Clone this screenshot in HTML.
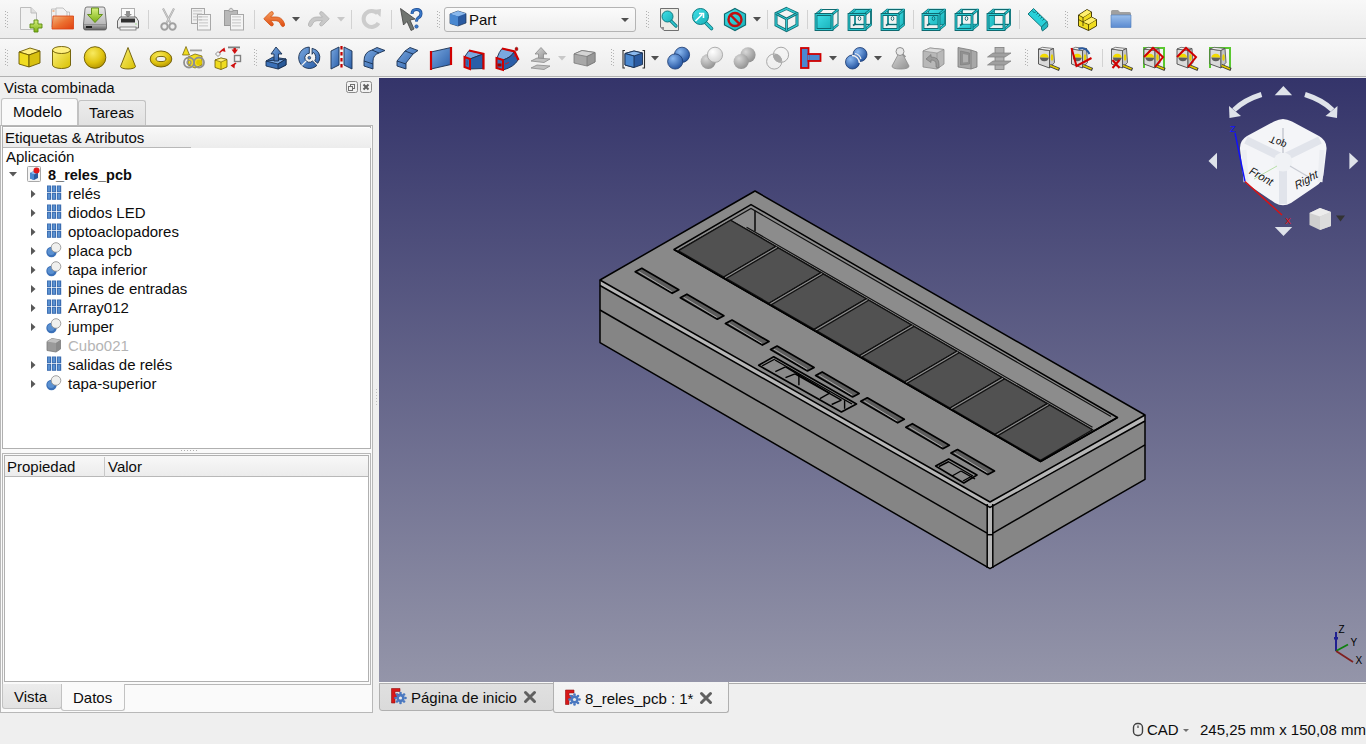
<!DOCTYPE html><html><head><meta charset="utf-8"><style>
*{box-sizing:border-box}
html,body{margin:0;padding:0}
body{width:1366px;height:744px;overflow:hidden;position:relative;background:#efefef;font-family:"Liberation Sans",sans-serif;font-size:15px;color:#0c0c0c}
.a{position:absolute}
.t{position:absolute;white-space:pre;line-height:18px}
svg{position:absolute;overflow:visible}
</style></head><body>
<div class="a" style="left:0;top:0;width:1366px;height:38px;background:linear-gradient(#f8f8f8,#ececec)"></div>
<div class="a" style="left:0;top:38px;width:1366px;height:1px;background:#bcbcbc"></div>
<div class="a" style="left:0;top:39px;width:1366px;height:37px;background:linear-gradient(#f8f8f8,#ececec)"></div>
<div class="a" style="left:0;top:76px;width:1366px;height:1px;background:#b2b2b2"></div>
<svg class="a" style="left:0;top:0" width="1366" height="77" viewBox="0 0 1366 77"><defs>
<linearGradient id="gy" x1="0" y1="0" x2="1" y2="1"><stop offset="0" stop-color="#fbf07a"/><stop offset="1" stop-color="#d8c000"/></linearGradient>
<radialGradient id="gys" cx="0.4" cy="0.3" r="0.75"><stop offset="0" stop-color="#f8ea60"/><stop offset="0.6" stop-color="#e0c410"/><stop offset="1" stop-color="#b09000"/></radialGradient>
<linearGradient id="gb" x1="0" y1="0" x2="1" y2="1"><stop offset="0" stop-color="#7aa8e0"/><stop offset="1" stop-color="#2a5ea8"/></linearGradient>
<radialGradient id="gbs" cx="0.35" cy="0.3" r="0.8"><stop offset="0" stop-color="#8ab8f0"/><stop offset="1" stop-color="#1a4a98"/></radialGradient>
<radialGradient id="ggs" cx="0.35" cy="0.3" r="0.8"><stop offset="0" stop-color="#d8d8d8"/><stop offset="1" stop-color="#8a8a8a"/></radialGradient>
<radialGradient id="gws" cx="0.35" cy="0.3" r="0.8"><stop offset="0" stop-color="#ffffff"/><stop offset="1" stop-color="#d0d0d0"/></radialGradient>
<linearGradient id="gor" x1="0" y1="0" x2="0" y2="1"><stop offset="0" stop-color="#f5a060"/><stop offset="1" stop-color="#e04a10"/></linearGradient>
<linearGradient id="gorf" x1="0" y1="0" x2="1" y2="1"><stop offset="0" stop-color="#f2b880"/><stop offset="0.5" stop-color="#ec7030"/><stop offset="1" stop-color="#e04010"/></linearGradient>
<linearGradient id="ggr" x1="0" y1="0" x2="0" y2="1"><stop offset="0" stop-color="#d8f080"/><stop offset="1" stop-color="#7ab010"/></linearGradient>
<linearGradient id="gdr" x1="0" y1="0" x2="0" y2="1"><stop offset="0" stop-color="#e8e8e8"/><stop offset="0.75" stop-color="#b8b8b8"/><stop offset="1" stop-color="#606060"/></linearGradient>
<linearGradient id="gt" x1="0" y1="0" x2="1" y2="1"><stop offset="0" stop-color="#40e0e8"/><stop offset="1" stop-color="#18b0b8"/></linearGradient>
<linearGradient id="ggy" x1="0" y1="0" x2="1" y2="1"><stop offset="0" stop-color="#d8d8d8"/><stop offset="1" stop-color="#909090"/></linearGradient>
<linearGradient id="gfold" x1="0" y1="0" x2="0" y2="1"><stop offset="0" stop-color="#9cc0ec"/><stop offset="1" stop-color="#5a8ad0"/></linearGradient>
</defs><rect x="5" y="11" width="1" height="1" fill="#b0b0b0"/><rect x="7" y="12" width="1" height="1" fill="#b8b8b8"/><rect x="5" y="14" width="1" height="1" fill="#b0b0b0"/><rect x="7" y="15" width="1" height="1" fill="#b8b8b8"/><rect x="5" y="17" width="1" height="1" fill="#b0b0b0"/><rect x="7" y="18" width="1" height="1" fill="#b8b8b8"/><rect x="5" y="20" width="1" height="1" fill="#b0b0b0"/><rect x="7" y="21" width="1" height="1" fill="#b8b8b8"/><rect x="5" y="23" width="1" height="1" fill="#b0b0b0"/><rect x="7" y="24" width="1" height="1" fill="#b8b8b8"/><rect x="5" y="26" width="1" height="1" fill="#b0b0b0"/><rect x="7" y="27" width="1" height="1" fill="#b8b8b8"/><g transform="translate(18,7)"><path d="M2.5,0.5 H13 L18.5,6 V22.5 H2.5 Z" fill="#f2f2f2" stroke="#bdbdbd"/><path d="M13,0.5 V6 H18.5" fill="#e0e0e0" stroke="#bdbdbd"/><path d="M16,13 H20 V17 H24 V21 H20 V25 H16 V21 H12 V17 H16 Z" fill="url(#ggr)" stroke="#5a8a10" stroke-width="0.9"/></g><g transform="translate(50,7)"><path d="M1.5,2 H8 V20 H1.5 Z" fill="#f0f0f0" stroke="#c0c0c0"/><rect x="2.5" y="3.5" width="2" height="1" fill="#f08030"/><path d="M6,1 H13 L17,5 V12 H6 Z" fill="#f2f2f2" stroke="#c0c0c0"/><path d="M17,5 H19.5 V12" fill="none" stroke="#c0c0c0"/><path d="M3,9 H23.5 V22 H2 Z" fill="url(#gorf)" stroke="#d84010" stroke-width="0.8"/></g><g transform="translate(83,7)"><path d="M2,2 Q2,0 4,0 H20 Q22,0 22,2 L23.5,17 V21 Q23.5,23 21.5,23 H2.5 Q0.5,23 0.5,21 V17 Z" fill="url(#gdr)" stroke="#5a5a5a" stroke-width="0.8"/><path d="M1,17.5 H23" stroke="#888" stroke-width="0.8"/><rect x="3" y="19" width="6" height="2" fill="#202020"/><path d="M8.5,1 H15.5 V7.5 H19.5 L12,15.5 L4.5,7.5 H8.5 Z" fill="url(#ggr)" stroke="#5a8a10" stroke-width="0.9"/></g><g transform="translate(117,8)"><rect x="4.5" y="0.5" width="13" height="11" fill="#fbfbfb" stroke="#b0b0b0"/><path d="M9,3 H13 V6 H15 L11,9.5 L7,6 H9 Z" fill="#909090"/><path d="M3,9 H19 L21.5,13 V20 H0.5 V13 Z" fill="#e8e8e8" stroke="#5a5a5a" stroke-width="0.9"/><rect x="4" y="10.5" width="14" height="4" fill="#303030"/><rect x="3" y="19" width="16" height="3" fill="#f4f4f4" stroke="#707070" stroke-width="0.8"/><rect x="18.5" y="15.5" width="1" height="1" fill="#60d040"/></g><rect x="148" y="10" width="1" height="19" fill="#d2d2d2"/><g transform="translate(160,8)"><path d="M3,0.5 L10.5,15 M14,0.5 L6.5,15" stroke="#a8a8a8" stroke-width="2" fill="none"/><path d="M3,0.5 L10.5,15 M14,0.5 L6.5,15" stroke="#e8e8e8" stroke-width="0.6" fill="none"/><circle cx="4.5" cy="18.5" r="3.2" fill="none" stroke="#a0a0a0" stroke-width="2"/><circle cx="12.5" cy="18.5" r="3.2" fill="none" stroke="#a0a0a0" stroke-width="2"/></g><g transform="translate(189,8)"><rect x="2.5" y="0.5" width="13" height="15" fill="#f0f0f0" stroke="#a8a8a8"/><rect x="8.5" y="6.5" width="13" height="15.5" fill="#f4f4f4" stroke="#a8a8a8"/><rect x="4" y="2.5" width="9" height="0.8" fill="#b8b8b8"/><rect x="4" y="5.5" width="9" height="0.8" fill="#b8b8b8"/><rect x="4" y="8.5" width="9" height="0.8" fill="#b8b8b8"/><rect x="4" y="11.5" width="9" height="0.8" fill="#b8b8b8"/><rect x="10" y="8.5" width="9" height="0.8" fill="#b8b8b8"/><rect x="10" y="11.5" width="9" height="0.8" fill="#b8b8b8"/><rect x="10" y="14.5" width="9" height="0.8" fill="#b8b8b8"/><rect x="10" y="17.5" width="9" height="0.8" fill="#b8b8b8"/></g><g transform="translate(222,8)"><rect x="2.5" y="2.5" width="13" height="15" fill="#b8b8b8" stroke="#9a9a9a"/><path d="M7,3.5 V1.5 L9,0 L11,1.5 V3.5 Z" fill="#d8d8d8" stroke="#9a9a9a" stroke-width="0.8"/><rect x="8.5" y="6.5" width="13" height="15.5" fill="#f4f4f4" stroke="#a8a8a8"/><rect x="10" y="8.5" width="9" height="0.8" fill="#b8b8b8"/><rect x="10" y="11.5" width="9" height="0.8" fill="#b8b8b8"/><rect x="10" y="14.5" width="9" height="0.8" fill="#b8b8b8"/><rect x="10" y="17.5" width="9" height="0.8" fill="#b8b8b8"/></g><rect x="254" y="10" width="1" height="19" fill="#d2d2d2"/><g transform="translate(263,10.5)"><path d="M1,8 L7.5,1.5 Q9,0.5 10,1.8 Q10.8,3 9.8,4.2 L7.6,6.5 H13 Q18,6.5 20.5,11 L21.5,13.5 Q22,15.5 20.5,16 Q19,16.4 18.2,15 L17,12.6 Q15.6,10.2 13,10.2 H7.6 L9.8,12.5 Q10.8,13.7 10,14.9 Q9,16 7.5,15 L1,8.6 Z" fill="url(#gor)" stroke="#d05010" stroke-width="0.8"/></g><polygon points="292,17 300,17 296,21.5" fill="#505050"/><g transform="translate(308,10.5)"><g transform="translate(22,0) scale(-1,1)"><path d="M1,8 L7.5,1.5 Q9,0.5 10,1.8 Q10.8,3 9.8,4.2 L7.6,6.5 H13 Q18,6.5 20.5,11 L21.5,13.5 Q22,15.5 20.5,16 Q19,16.4 18.2,15 L17,12.6 Q15.6,10.2 13,10.2 H7.6 L9.8,12.5 Q10.8,13.7 10,14.9 Q9,16 7.5,15 L1,8.6 Z" fill="#c8c8c8" stroke="#b0b0b0" stroke-width="0.8"/></g></g><polygon points="337,17 345,17 341,21.5" fill="#c8c8c8"/><rect x="351" y="10" width="1" height="19" fill="#d2d2d2"/><g transform="translate(361,8)"><path d="M16.5,5.5 A8,8 0 1 0 17.5,15" fill="none" stroke="#cccccc" stroke-width="4"/><polygon points="12,2 20,1 19.5,9" fill="#cccccc"/></g><rect x="391" y="10" width="1" height="19" fill="#d2d2d2"/><g transform="translate(400,8)"><path d="M0.5,0.5 L15,11 L10,12 L14,21 L11,22.5 L7,13.5 L3.5,17 Z" fill="#707470" stroke="#404040" stroke-width="0.8"/><path d="M12,6 Q12,1.5 16.5,1.5 Q21,1.5 21,5.5 Q21,8.5 18,10 Q16.5,11 16.5,13.5" fill="none" stroke="#1a4a90" stroke-width="3"/><path d="M12,6 Q12,1.5 16.5,1.5 Q21,1.5 21,5.5 Q21,8.5 18,10 Q16.5,11 16.5,13.5" fill="none" stroke="#3a78c8" stroke-width="1.6"/><circle cx="16.5" cy="18.5" r="1.7" fill="#3a78c8" stroke="#1a4a90" stroke-width="0.6"/></g><rect x="437" y="11" width="1" height="1" fill="#b0b0b0"/><rect x="439" y="12" width="1" height="1" fill="#b8b8b8"/><rect x="437" y="14" width="1" height="1" fill="#b0b0b0"/><rect x="439" y="15" width="1" height="1" fill="#b8b8b8"/><rect x="437" y="17" width="1" height="1" fill="#b0b0b0"/><rect x="439" y="18" width="1" height="1" fill="#b8b8b8"/><rect x="437" y="20" width="1" height="1" fill="#b0b0b0"/><rect x="439" y="21" width="1" height="1" fill="#b8b8b8"/><rect x="437" y="23" width="1" height="1" fill="#b0b0b0"/><rect x="439" y="24" width="1" height="1" fill="#b8b8b8"/><rect x="437" y="26" width="1" height="1" fill="#b0b0b0"/><rect x="439" y="27" width="1" height="1" fill="#b8b8b8"/><rect x="646" y="11" width="1" height="1" fill="#b0b0b0"/><rect x="648" y="12" width="1" height="1" fill="#b8b8b8"/><rect x="646" y="14" width="1" height="1" fill="#b0b0b0"/><rect x="648" y="15" width="1" height="1" fill="#b8b8b8"/><rect x="646" y="17" width="1" height="1" fill="#b0b0b0"/><rect x="648" y="18" width="1" height="1" fill="#b8b8b8"/><rect x="646" y="20" width="1" height="1" fill="#b0b0b0"/><rect x="648" y="21" width="1" height="1" fill="#b8b8b8"/><rect x="646" y="23" width="1" height="1" fill="#b0b0b0"/><rect x="648" y="24" width="1" height="1" fill="#b8b8b8"/><rect x="646" y="26" width="1" height="1" fill="#b0b0b0"/><rect x="648" y="27" width="1" height="1" fill="#b8b8b8"/><g transform="translate(660,8)"><path d="M0.5,0.5 H18.5 V22.5 H4 L0.5,19 Z" fill="#ecece6" stroke="#707070"/><path d="M0.5,19 L4,19 L4,22.5 Z" fill="#909090"/><line x1="10" y1="12" x2="16" y2="18" stroke="#107a80" stroke-width="3.2" stroke-linecap="round"/><line x1="10" y1="12" x2="16" y2="18" stroke="#30c8d0" stroke-width="1.6" stroke-linecap="round"/><circle cx="7.5" cy="8.5" r="5.5" fill="url(#gt)" stroke="#107a80" stroke-width="1"/></g><g transform="translate(691,7)"><line x1="14" y1="15" x2="20.5" y2="21.5" stroke="#107a80" stroke-width="3.6" stroke-linecap="round"/><line x1="14" y1="15" x2="20.5" y2="21.5" stroke="#30c8d0" stroke-width="2" stroke-linecap="round"/><circle cx="9.5" cy="9.5" r="8" fill="url(#gt)" stroke="#107a80" stroke-width="1"/><path d="M4.5,14 L11,7.5 M8,6.5 H12.5 V11" fill="none" stroke="#fff" stroke-width="1.6"/></g><g transform="translate(724,8)"><polygon points="11,0.5 21.5,6 21.5,17 11,22.5 0.5,17 0.5,6" fill="url(#gt)" stroke="#0e6a70" stroke-width="1.2"/><circle cx="11" cy="11.5" r="6.5" fill="none" stroke="#c01010" stroke-width="2.4"/><line x1="6.5" y1="7" x2="15.5" y2="16" stroke="#c01010" stroke-width="2.4"/></g><polygon points="753,17 761,17 757,21.5" fill="#505050"/><rect x="767" y="10" width="1" height="19" fill="#d2d2d2"/><g transform="translate(775,8)"><polygon points="11.5,0.5 22,5.5 22,17 11.5,22.5 1,17 1,5.5" fill="none" stroke="#0e6a70" stroke-width="3"/><polygon points="11.5,0.5 22,5.5 22,17 11.5,22.5 1,17 1,5.5" fill="none" stroke="#30c8d0" stroke-width="1.4"/><path d="M1,5.5 L11.5,11 L22,5.5 M11.5,11 V22.5" fill="none" stroke="#0e6a70" stroke-width="2.6"/><path d="M1,5.5 L11.5,11 L22,5.5 M11.5,11 V22.5" fill="none" stroke="#30c8d0" stroke-width="1"/></g><rect x="807" y="10" width="1" height="19" fill="#d2d2d2"/><g transform="translate(815,8)"><g transform="translate(0,0.5)"><rect x="1" y="6" width="16" height="15" fill="url(#gt)"/><path d="M7,1 H23 V16" stroke="#0e6a70" stroke-width="1.1" fill="none"/><path d="M1,6 L7,1 M17,6 L23,1 M17,21 L23,16" stroke="#0e6a70" stroke-width="2.6"/><path d="M1,6 L7,1 M17,6 L23,1 M17,21 L23,16" stroke="#28c8d0" stroke-width="1.2"/><path d="M1,6 H17 V21 H1 Z" stroke="#0e6a70" stroke-width="2.8" fill="none"/><path d="M1,6 H17 V21 H1 Z" stroke="#28c8d0" stroke-width="1.2" fill="none"/></g></g><g transform="translate(848,8)"><g transform="translate(0,0.5)"><path d="M7,1 H23 V16 H7 Z" stroke="#20b8c0" stroke-width="1.6" fill="none"/><path d="M7,1 H23 V16 H7 Z" stroke="#0e6a70" stroke-width="1.1" fill="none"/><polygon points="1,6 7,1 23,1 17,6" fill="url(#gt)"/><path d="M7,1 H23 V16" stroke="#0e6a70" stroke-width="1.1" fill="none"/><path d="M1,6 L7,1 M17,6 L23,1 M17,21 L23,16" stroke="#0e6a70" stroke-width="2.6"/><path d="M1,6 L7,1 M17,6 L23,1 M17,21 L23,16" stroke="#28c8d0" stroke-width="1.2"/><path d="M1,6 H17 V21 H1 Z" stroke="#0e6a70" stroke-width="2.8" fill="none"/><path d="M1,6 H17 V21 H1 Z" stroke="#28c8d0" stroke-width="1.2" fill="none"/><ellipse cx="11.5" cy="10" rx="1.3" ry="2" fill="none" stroke="#0e6a70" stroke-width="0.9"/><path d="M5,17 L8,15" stroke="#0e6a70" stroke-width="1.6"/></g></g><g transform="translate(881,8)"><g transform="translate(0,0.5)"><path d="M7,1 H23 V16 H7 Z" stroke="#20b8c0" stroke-width="1.6" fill="none"/><path d="M7,1 H23 V16 H7 Z" stroke="#0e6a70" stroke-width="1.1" fill="none"/><polygon points="17,6 23,1 23,16 17,21" fill="url(#gt)"/><path d="M7,1 H23 V16" stroke="#0e6a70" stroke-width="1.1" fill="none"/><path d="M1,6 L7,1 M17,6 L23,1 M17,21 L23,16" stroke="#0e6a70" stroke-width="2.6"/><path d="M1,6 L7,1 M17,6 L23,1 M17,21 L23,16" stroke="#28c8d0" stroke-width="1.2"/><path d="M1,6 H17 V21 H1 Z" stroke="#0e6a70" stroke-width="2.8" fill="none"/><path d="M1,6 H17 V21 H1 Z" stroke="#28c8d0" stroke-width="1.2" fill="none"/><ellipse cx="11.5" cy="10" rx="1.3" ry="2" fill="none" stroke="#0e6a70" stroke-width="0.9"/><path d="M5,17 L8,15" stroke="#0e6a70" stroke-width="1.6"/></g></g><g transform="translate(922,8)"><g transform="translate(0,0.5)"><path d="M7,1 H23 V16 H7 Z" stroke="#20b8c0" stroke-width="1.6" fill="none"/><path d="M7,1 H23 V16 H7 Z" stroke="#0e6a70" stroke-width="1.1" fill="none"/><rect x="7" y="1" width="16" height="15" fill="url(#gt)"/><path d="M7,1 H23 V16" stroke="#0e6a70" stroke-width="1.1" fill="none"/><path d="M1,6 L7,1 M17,6 L23,1 M17,21 L23,16" stroke="#0e6a70" stroke-width="2.6"/><path d="M1,6 L7,1 M17,6 L23,1 M17,21 L23,16" stroke="#28c8d0" stroke-width="1.2"/><path d="M1,6 H17 V21 H1 Z" stroke="#0e6a70" stroke-width="2.8" fill="none"/><path d="M1,6 H17 V21 H1 Z" stroke="#28c8d0" stroke-width="1.2" fill="none"/><ellipse cx="11.5" cy="10" rx="1.3" ry="2" fill="none" stroke="#0e6a70" stroke-width="0.9"/><path d="M5,17 L8,15" stroke="#0e6a70" stroke-width="1.6"/></g></g><g transform="translate(955,8)"><g transform="translate(0,0.5)"><path d="M7,1 H23 V16 H7 Z" stroke="#20b8c0" stroke-width="1.6" fill="none"/><path d="M7,1 H23 V16 H7 Z" stroke="#0e6a70" stroke-width="1.1" fill="none"/><polygon points="1,21 7,16 23,16 17,21" fill="url(#gt)"/><path d="M7,1 H23 V16" stroke="#0e6a70" stroke-width="1.1" fill="none"/><path d="M1,6 L7,1 M17,6 L23,1 M17,21 L23,16" stroke="#0e6a70" stroke-width="2.6"/><path d="M1,6 L7,1 M17,6 L23,1 M17,21 L23,16" stroke="#28c8d0" stroke-width="1.2"/><path d="M1,6 H17 V21 H1 Z" stroke="#0e6a70" stroke-width="2.8" fill="none"/><path d="M1,6 H17 V21 H1 Z" stroke="#28c8d0" stroke-width="1.2" fill="none"/><ellipse cx="11.5" cy="10" rx="1.3" ry="2" fill="none" stroke="#0e6a70" stroke-width="0.9"/><path d="M5,17 L8,15" stroke="#0e6a70" stroke-width="1.6"/></g></g><g transform="translate(987,8)"><g transform="translate(0,0.5)"><path d="M7,1 H23 V16 H7 Z" stroke="#20b8c0" stroke-width="1.6" fill="none"/><path d="M7,1 H23 V16 H7 Z" stroke="#0e6a70" stroke-width="1.1" fill="none"/><polygon points="1,6 7,1 7,16 1,21" fill="url(#gt)"/><path d="M7,1 H23 V16" stroke="#0e6a70" stroke-width="1.1" fill="none"/><path d="M1,6 L7,1 M17,6 L23,1 M17,21 L23,16" stroke="#0e6a70" stroke-width="2.6"/><path d="M1,6 L7,1 M17,6 L23,1 M17,21 L23,16" stroke="#28c8d0" stroke-width="1.2"/><path d="M1,6 H17 V21 H1 Z" stroke="#0e6a70" stroke-width="2.8" fill="none"/><path d="M1,6 H17 V21 H1 Z" stroke="#28c8d0" stroke-width="1.2" fill="none"/></g></g><rect x="913" y="10" width="1" height="19" fill="#d2d2d2"/><rect x="1019" y="10" width="1" height="19" fill="#d2d2d2"/><g transform="translate(1027,8)"><path d="M1,6 L6.5,0.5 L20,13.5 L14.5,19 Z" fill="#28d0d8" stroke="#0e6a70" stroke-width="0.9"/><path d="M14.5,19 L20,13.5 Q21.5,16.5 20.5,19 L15.5,23 Q14,21 14.5,19 Z" fill="#20b8c0" stroke="#0e6a70" stroke-width="0.9"/><path d="M5,2.5 L7.5,5 M7.5,5 L9,3.5 M9.5,6.5 L11,5 M11.5,8.5 L13,7 M13.5,10.5 L15,9 M15.5,12.5 L17,11" stroke="#0e6a70" stroke-width="0.9"/></g><rect x="1065" y="11" width="1" height="1" fill="#b0b0b0"/><rect x="1067" y="12" width="1" height="1" fill="#b8b8b8"/><rect x="1065" y="14" width="1" height="1" fill="#b0b0b0"/><rect x="1067" y="15" width="1" height="1" fill="#b8b8b8"/><rect x="1065" y="17" width="1" height="1" fill="#b0b0b0"/><rect x="1067" y="18" width="1" height="1" fill="#b8b8b8"/><rect x="1065" y="20" width="1" height="1" fill="#b0b0b0"/><rect x="1067" y="21" width="1" height="1" fill="#b8b8b8"/><rect x="1065" y="23" width="1" height="1" fill="#b0b0b0"/><rect x="1067" y="24" width="1" height="1" fill="#b8b8b8"/><rect x="1065" y="26" width="1" height="1" fill="#b0b0b0"/><rect x="1067" y="27" width="1" height="1" fill="#b8b8b8"/><g transform="translate(1077,8)"><path d="M1.5,7 L10,1.5 L14.5,4 V9 L19.5,11.5 V18 L11.5,22.5 L1.5,18 Z" fill="#f0dc20" stroke="#3a3000" stroke-width="0.9"/><path d="M1.5,7 L6,9.5 L14.5,4 M6,9.5 V18 M1.5,11.5 L6,14 L14.5,9 M6,14 L11.5,16.5 L19.5,11.5 M11.5,16.5 V22.5" fill="none" stroke="#3a3000" stroke-width="0.8"/><path d="M6.5,9 L14,4.3 L10,2 L2.5,7 Z" fill="#fff070"/><path d="M12,16 L19,11.8 L14.8,9.5 L6.5,14 Z" fill="#fff070"/></g><g transform="translate(1110,8)"><path d="M1,3.5 Q1,2 2.5,2 H8 L10,4 H19.5 Q21,4 21,5.5 V19 H1 Z" fill="#a0a0a0"/><path d="M1,7 H21 V19.5 H1 Z" fill="url(#gfold)" stroke="#4a78b8" stroke-width="0.6"/></g><rect x="5" y="49" width="1" height="1" fill="#b0b0b0"/><rect x="7" y="50" width="1" height="1" fill="#b8b8b8"/><rect x="5" y="52" width="1" height="1" fill="#b0b0b0"/><rect x="7" y="53" width="1" height="1" fill="#b8b8b8"/><rect x="5" y="55" width="1" height="1" fill="#b0b0b0"/><rect x="7" y="56" width="1" height="1" fill="#b8b8b8"/><rect x="5" y="58" width="1" height="1" fill="#b0b0b0"/><rect x="7" y="59" width="1" height="1" fill="#b8b8b8"/><rect x="5" y="61" width="1" height="1" fill="#b0b0b0"/><rect x="7" y="62" width="1" height="1" fill="#b8b8b8"/><rect x="5" y="64" width="1" height="1" fill="#b0b0b0"/><rect x="7" y="65" width="1" height="1" fill="#b8b8b8"/><g transform="translate(18,46)"><polygon points="1,6 12,2 22,5 11,9" fill="#fff080" stroke="#6a5800" stroke-width="0.9"/><polygon points="1,6 11,9 11,21 1,18" fill="#f0dc20" stroke="#6a5800" stroke-width="0.9"/><polygon points="11,9 22,5 22,17 11,21" fill="#d8c010" stroke="#6a5800" stroke-width="0.9"/></g><g transform="translate(52,46)"><path d="M0.5,4 V19 A9,3.5 0 0 0 18.5,19 V4" fill="url(#gy)" stroke="#6a5800" stroke-width="0.9"/><ellipse cx="9.5" cy="4" rx="9" ry="3.5" fill="#fff080" stroke="#6a5800" stroke-width="0.9"/></g><g transform="translate(84,46)"><circle cx="11" cy="11.5" r="10.8" fill="url(#gys)" stroke="#6a5800" stroke-width="0.9"/></g><g transform="translate(120,47)"><path d="M8,0.5 L15.5,19.5 A7.5,2.5 0 0 1 0.5,19.5 Z" fill="url(#gy)" stroke="#6a5800" stroke-width="0.9"/></g><g transform="translate(150,50.5)"><ellipse cx="11" cy="8.5" rx="10.8" ry="8" fill="url(#gys)" stroke="#6a5800" stroke-width="0.9"/><ellipse cx="11" cy="8.5" rx="5" ry="2.6" fill="#f0f0f0" stroke="#6a5800" stroke-width="0.9"/></g><g transform="translate(182,46)"><path d="M4,0.5 L7.5,9 H0.5 Z" fill="#f0dc20" stroke="#6a5800" stroke-width="0.7"/><rect x="8" y="3.5" width="12" height="1.8" fill="#a0a0a0"/><polygon points="6,11 13,8 20,10 20,19 13,22 6,19" fill="#f0dc20" stroke="#6a5800" stroke-width="0.7"/><circle cx="7" cy="16.5" r="5" fill="none" stroke="#909090" stroke-width="1.8"/><circle cx="7" cy="16.5" r="2" fill="none" stroke="#909090" stroke-width="1.2"/><circle cx="17" cy="16.5" r="5" fill="none" stroke="#909090" stroke-width="1.8"/><circle cx="17" cy="16.5" r="2.8" fill="#e0c800"/></g><g transform="translate(214,46)"><polygon points="1,14 7,12 13,13.5 13,21 7,23.5 1,21.5" fill="#f0dc20" stroke="#6a5800" stroke-width="0.8"/><polygon points="1,14 7,16 13,13.5 7,12" fill="#fff080" stroke="#6a5800" stroke-width="0.6"/><path d="M7,16 V23.5" stroke="#6a5800" stroke-width="0.6"/><rect x="14" y="0.5" width="12" height="1.8" fill="#808080"/><rect x="20.5" y="9.5" width="6" height="6" fill="#f4f4f4" stroke="#808080" stroke-width="1.4"/><polygon points="17.5,3.5 24,3.5 20.7,8" fill="#d01010"/><rect x="19.5" y="2" width="2.4" height="3" fill="#d01010"/><polygon points="6.5,4.5 10.5,1.5 11.5,6" fill="#d01010"/><line x1="5" y1="7" x2="8" y2="4.5" stroke="#d01010" stroke-width="1.5"/><polygon points="16.5,19.5 21,17 20.5,22.5" fill="#d01010"/><line x1="19" y1="19.5" x2="22" y2="17" stroke="#d01010" stroke-width="1.5"/><polygon points="1.5,8 4,5.5 6.5,8 4,10.5" fill="#f4f4f4" stroke="#808080" stroke-width="0.9"/></g><rect x="254" y="49" width="1" height="1" fill="#b0b0b0"/><rect x="256" y="50" width="1" height="1" fill="#b8b8b8"/><rect x="254" y="52" width="1" height="1" fill="#b0b0b0"/><rect x="256" y="53" width="1" height="1" fill="#b8b8b8"/><rect x="254" y="55" width="1" height="1" fill="#b0b0b0"/><rect x="256" y="56" width="1" height="1" fill="#b8b8b8"/><rect x="254" y="58" width="1" height="1" fill="#b0b0b0"/><rect x="256" y="59" width="1" height="1" fill="#b8b8b8"/><rect x="254" y="61" width="1" height="1" fill="#b0b0b0"/><rect x="256" y="62" width="1" height="1" fill="#b8b8b8"/><rect x="254" y="64" width="1" height="1" fill="#b0b0b0"/><rect x="256" y="65" width="1" height="1" fill="#b8b8b8"/><g transform="translate(265,46)"><polygon points="1,15 8,11 21,13 21,19 13,23 1,20" fill="#3a70b8" stroke="#1a3050" stroke-width="0.9"/><polygon points="1,15 13,18 21,13" fill="#7aa8e0" stroke="#1a3050" stroke-width="0.9"/><polygon points="13,18 21,13 21,19 13,23" fill="#2a5a98" stroke="#1a3050" stroke-width="0.9"/><path d="M6,8 L11,1 L17,8 H13.5 V15 H9 V8 Z" fill="url(#gb)" stroke="#1a3050" stroke-width="0.9"/></g><g transform="translate(298.3,46.8)"><path d="M11,0.3 A10.7,10.7 0 1 0 18.6,18.6 L14.2,14.2 A4.5,4.5 0 1 1 11,6.5 Z" fill="url(#gb)" stroke="#1a3050" stroke-width="0.9"/><line x1="7.8" y1="14.2" x2="3.2" y2="18.8" stroke="#f4f4f4" stroke-width="1.3"/><circle cx="11" cy="11" r="1.4" fill="#4a80c8" stroke="#1a3050" stroke-width="0.7"/><path d="M13.8,1.5 L18,3.2 A9.5,9.5 0 0 1 19.5,16.5 L16.5,14 A6.5,6.5 0 0 0 15,5.5 L13.8,7.5 Z" fill="url(#gb)" stroke="#1a3050" stroke-width="0.9"/></g><g transform="translate(330,46)"><polygon points="1,5 9,1 9,19 1,23" fill="url(#gb)" stroke="#1a3050" stroke-width="0.9"/><polygon points="22,5 14,1 14,19 22,23" fill="url(#gb)" stroke="#1a3050" stroke-width="0.9"/><path d="M11.5,0 V24" stroke="#c00000" stroke-width="2.2" stroke-dasharray="3.5,2.5"/></g><g transform="translate(363,47)"><path d="M1,14 Q1,5 9,3 L14,0.5 L22,3.5 L16,6 Q10,8 10,14 V22 L1,19 Z" fill="url(#gb)" stroke="#1a3050" stroke-width="0.9"/><path d="M1,14 L10,17 M9,3 L16,6" fill="none" stroke="#1a3050" stroke-width="0.9"/></g><g transform="translate(396,47)"><path d="M1,14 L9,4 L14,0.5 L22,3.5 L17,7 L10,16 V22 L1,19 Z" fill="url(#gb)" stroke="#1a3050" stroke-width="0.9"/><path d="M1,14 L10,17 M9,4 L17,7" fill="none" stroke="#1a3050" stroke-width="0.9"/></g><g transform="translate(429,47)"><polygon points="2,5 22,0.5 22,17.5 2,22" fill="url(#gb)" stroke="#1a3050" stroke-width="0.9"/><path d="M2,4 V23 M22,0 V18" stroke="#d00000" stroke-width="2.2"/></g><g transform="translate(463,47.5)"><polygon points="1.5,9.5 6,3 20,6.5 7,11.5" fill="#7aa8e0" stroke="#1a3050" stroke-width="0.9"/><polygon points="7,11.5 20,6.5 20,21 7,21.5" fill="#2a5ea8" stroke="#1a3050" stroke-width="0.9"/><polygon points="1.5,9.5 7,11.5 7,21.5 1.5,19.5" fill="#3a70b8" stroke="#d00000" stroke-width="2"/><polygon points="3.5,12.5 5,13 5,18 3.5,17.5" fill="#2a5ea8"/><path d="M6,3 L20.5,6.3 V22" fill="none" stroke="#d00000" stroke-width="2.2"/></g><g transform="translate(495,47)"><path d="M2,11 Q4,5 7,1.5 L19.5,4.5 Q16,10.5 8,13 Z" fill="#7aa8e0" stroke="#1a3050" stroke-width="0.9"/><path d="M8,13 Q16,10.5 19.5,4.5 L23,13 Q19,20 8,23 Z" fill="#2a5ea8" stroke="#1a3050" stroke-width="0.9"/><polygon points="1.5,11 8,13 8,23 1.5,21" fill="#3a70b8" stroke="#d00000" stroke-width="2"/><rect x="2.5" y="16.5" width="4" height="3" fill="#a00000"/><path d="M7,1.5 L19.5,4.5 L23.5,13" fill="none" stroke="#d00000" stroke-width="2.2"/><path d="M10,17 L14,15.5 M19,10 L20,8" stroke="#c02030" stroke-width="1"/><ellipse cx="21.5" cy="2" rx="1.4" ry="1.8" fill="#d00000" stroke="#600000" stroke-width="0.5"/></g><g transform="translate(530,47)"><path d="M5,7 L11,0.5 L17,7 H13.5 V12 H8.5 V7 Z" fill="url(#ggy)" stroke="#8a8a8a" stroke-width="0.8"/><polygon points="1,14 7,11 20,12 14,15.5" fill="#c0c0c0" stroke="#8a8a8a" stroke-width="0.8"/><polygon points="1,21 7,18 20,19 14,22.5" fill="#c0c0c0" stroke="#8a8a8a" stroke-width="0.8"/></g><polygon points="558,56 566,56 562,60.5" fill="#c8c8c8"/><g transform="translate(573,49)"><polygon points="1,5 9,1.5 22,3.5 22,13 14,17 1,14" fill="#a8a8a8" stroke="#7a7a7a" stroke-width="0.8"/><polygon points="1,5 14,7.5 22,3.5 9,1.5" fill="#d4d4d4" stroke="#7a7a7a" stroke-width="0.8"/><polygon points="14,7.5 22,3.5 22,13 14,17" fill="#989898" stroke="#7a7a7a" stroke-width="0.8"/></g><rect x="611" y="49" width="1" height="1" fill="#b0b0b0"/><rect x="613" y="50" width="1" height="1" fill="#b8b8b8"/><rect x="611" y="52" width="1" height="1" fill="#b0b0b0"/><rect x="613" y="53" width="1" height="1" fill="#b8b8b8"/><rect x="611" y="55" width="1" height="1" fill="#b0b0b0"/><rect x="613" y="56" width="1" height="1" fill="#b8b8b8"/><rect x="611" y="58" width="1" height="1" fill="#b0b0b0"/><rect x="613" y="59" width="1" height="1" fill="#b8b8b8"/><rect x="611" y="61" width="1" height="1" fill="#b0b0b0"/><rect x="613" y="62" width="1" height="1" fill="#b8b8b8"/><rect x="611" y="64" width="1" height="1" fill="#b0b0b0"/><rect x="613" y="65" width="1" height="1" fill="#b8b8b8"/><g transform="translate(622,49.5)"><path d="M3,1 H1 V18.5 H3 M20.5,1 H22.5 V18.5 H20.5" fill="none" stroke="#303030" stroke-width="1.1"/><polygon points="3,4 12,1.5 20.5,3.5 20.5,15 12,18 3,15.5" fill="#2a5aa0" stroke="#1a3050" stroke-width="0.9"/><polygon points="3,4 12,6.5 20.5,3.5 12,1.5" fill="#8ab8ec" stroke="#1a3050" stroke-width="0.9"/><polygon points="3,4 12,6.5 12,18 3,15.5" fill="#4a88d0" stroke="#1a3050" stroke-width="0.9"/></g><polygon points="651,56 659,56 655,60.5" fill="#505050"/><g transform="translate(667,47)"><circle cx="15" cy="7.8" r="7.6" fill="url(#gbs)" stroke="#1a3a70" stroke-width="0.8"/><circle cx="8.2" cy="14.5" r="7.6" fill="url(#gbs)" stroke="#1a3a70" stroke-width="0.8"/></g><g transform="translate(700,47)"><circle cx="8.2" cy="14.5" r="7.6" fill="url(#ggs)"/><circle cx="15" cy="7.8" r="7.6" fill="url(#gws)" stroke="#a0a0a0" stroke-width="0.8"/></g><g transform="translate(733,47)"><circle cx="15" cy="7.8" r="7.6" fill="url(#ggs)"/><circle cx="8.2" cy="14.5" r="7.6" fill="url(#ggs)"/></g><g transform="translate(766,47)"><circle cx="15" cy="7.8" r="7.6" fill="none" stroke="#a8a8a8" stroke-width="1"/><circle cx="8.2" cy="14.5" r="7.6" fill="none" stroke="#a8a8a8" stroke-width="1"/><ellipse cx="11.6" cy="11.2" rx="3.2" ry="5" transform="rotate(-45 11.6 11.2)" fill="#a8a8a8"/></g><g transform="translate(800,47)"><rect x="1" y="1" width="7.5" height="20" fill="#4a88d0" stroke="#d00000" stroke-width="1.8"/><rect x="8.5" y="7" width="12" height="7" fill="#4a88d0" stroke="#d00000" stroke-width="1.8"/><rect x="7.5" y="8" width="2" height="5" fill="#4a88d0"/></g><polygon points="829,56 837,56 833,60.5" fill="#505050"/><g transform="translate(845,47)"><circle cx="15" cy="7.5" r="7" fill="url(#gbs)" stroke="#1a3a70" stroke-width="0.8"/><circle cx="7.5" cy="15" r="7" fill="url(#gbs)" stroke="#1a3a70" stroke-width="0.8"/><path d="M7,8.5 A7.5,7.5 0 0 1 14.5,16" fill="none" stroke="#f0f0f0" stroke-width="1.6"/><path d="M10,6.5 A7.5,7.5 0 0 1 16,12" fill="none" stroke="#f0f0f0" stroke-width="1.2"/></g><polygon points="874,56 882,56 878,60.5" fill="#505050"/><g transform="translate(891.5,47)"><path d="M7.5,6 L0.5,19 Q0.5,22 9,22 Q17.5,22 17.5,19 L10.5,6 Z" fill="url(#ggy)" stroke="#8a8a8a" stroke-width="0.8"/><circle cx="8.5" cy="4.5" r="4" fill="#e8e8e8" stroke="#909090" stroke-width="1"/><line x1="11" y1="7" x2="14" y2="10" stroke="#909090" stroke-width="1.6"/></g><g transform="translate(922,47)"><polygon points="1,4 8,1 22,2.5 22,17 15,22 1,20" fill="#b8b8b8" stroke="#8a8a8a" stroke-width="0.8"/><polygon points="1,4 15,6 22,2.5 8,1" fill="#dcdcdc" stroke="#8a8a8a" stroke-width="0.6"/><path d="M15,6 V22" stroke="#8a8a8a" stroke-width="0.6"/><path d="M4,12 L9,7.5 V10 Q17,10 17,17 V21 L14,20 V17 Q14,13 9,13 V15.5 Z" fill="#9a9a9a" stroke="#707070" stroke-width="0.6"/></g><g transform="translate(957,47)"><polygon points="1,0.5 14,3 20,5 20,20 14,22 1,20" fill="#a8a8a8" stroke="#7a7a7a" stroke-width="0.8"/><polygon points="3.5,4 12.5,6 12.5,17 3.5,18" fill="#909090" stroke="#7a7a7a" stroke-width="0.6"/><polygon points="6,7 11,8 11,15 6,15.5" fill="#b0b0b0"/><path d="M14,3 V22" stroke="#7a7a7a" stroke-width="0.8"/></g><g transform="translate(987,47)"><rect x="8" y="0.5" width="9" height="22" fill="#b0b0b0" stroke="#808080" stroke-width="0.8"/><polygon points="0.5,10 6,6 24,6 18,10" fill="#a0a0a0" stroke="#808080" stroke-width="0.7"/><polygon points="0.5,18 6,14 24,14 18,18" fill="#a0a0a0" stroke="#808080" stroke-width="0.7"/></g><rect x="1025" y="49" width="1" height="1" fill="#b0b0b0"/><rect x="1027" y="50" width="1" height="1" fill="#b8b8b8"/><rect x="1025" y="52" width="1" height="1" fill="#b0b0b0"/><rect x="1027" y="53" width="1" height="1" fill="#b8b8b8"/><rect x="1025" y="55" width="1" height="1" fill="#b0b0b0"/><rect x="1027" y="56" width="1" height="1" fill="#b8b8b8"/><rect x="1025" y="58" width="1" height="1" fill="#b0b0b0"/><rect x="1027" y="59" width="1" height="1" fill="#b8b8b8"/><rect x="1025" y="61" width="1" height="1" fill="#b0b0b0"/><rect x="1027" y="62" width="1" height="1" fill="#b8b8b8"/><rect x="1025" y="64" width="1" height="1" fill="#b0b0b0"/><rect x="1027" y="65" width="1" height="1" fill="#b8b8b8"/><g transform="translate(1037.5,47)"><polygon points="1,2 12,3.5 12,21 1,17" fill="#dadada" stroke="#4a4a4a" stroke-width="0.9"/><polygon points="1,2 5,0.3 16,1.5 12,3.5" fill="#f0f0f0" stroke="#4a4a4a" stroke-width="0.7"/><polygon points="12,3.5 16,1.5 17,15.5 12,21" fill="#c4c4c4" stroke="#4a4a4a" stroke-width="0.8"/><path d="M2.3,10.5 A4.6,4.8 0 0 1 11.3,10.8 Z" fill="#f2da00"/><path d="M2.3,10.5 A4.6,4.6 0 0 0 11.3,10.8 Z" fill="#5e5e5e"/><ellipse cx="14.5" cy="10.5" rx="1.2" ry="3.2" fill="#e8d000"/><path d="M12.5,18.5 L22,22.5" stroke="#3a3a3a" stroke-width="3"/><path d="M12.5,18.5 L21,22" stroke="#e0c800" stroke-width="1.8"/></g><g transform="translate(1070.5,47)"><polygon points="1,2 12,3.5 12,21 1,17" fill="#dadada" stroke="#4a4a4a" stroke-width="0.9"/><polygon points="1,2 5,0.3 16,1.5 12,3.5" fill="#f0f0f0" stroke="#4a4a4a" stroke-width="0.7"/><polygon points="12,3.5 16,1.5 17,15.5 12,21" fill="#c4c4c4" stroke="#4a4a4a" stroke-width="0.8"/><path d="M2.3,10.5 A4.6,4.8 0 0 1 11.3,10.8 Z" fill="#f2da00"/><path d="M2.3,10.5 A4.6,4.6 0 0 0 11.3,10.8 Z" fill="#5e5e5e"/><ellipse cx="14.5" cy="10.5" rx="1.2" ry="3.2" fill="#e8d000"/><path d="M12.5,18.5 L22,22.5" stroke="#3a3a3a" stroke-width="3"/><path d="M12.5,18.5 L21,22" stroke="#e0c800" stroke-width="1.8"/><path d="M1,1 L6,19 L21,11" fill="none" stroke="#d00000" stroke-width="2"/><path d="M8,2 Q15,-1 19,7" fill="none" stroke="#2a5aa0" stroke-width="2"/></g><rect x="1102" y="49" width="1" height="18" fill="#d2d2d2"/><g transform="translate(1110.5,47)"><polygon points="1,2 12,3.5 12,21 1,17" fill="#dadada" stroke="#4a4a4a" stroke-width="0.9"/><polygon points="1,2 5,0.3 16,1.5 12,3.5" fill="#f0f0f0" stroke="#4a4a4a" stroke-width="0.7"/><polygon points="12,3.5 16,1.5 17,15.5 12,21" fill="#c4c4c4" stroke="#4a4a4a" stroke-width="0.8"/><path d="M2.3,10.5 A4.6,4.8 0 0 1 11.3,10.8 Z" fill="#f2da00"/><path d="M2.3,10.5 A4.6,4.6 0 0 0 11.3,10.8 Z" fill="#5e5e5e"/><ellipse cx="14.5" cy="10.5" rx="1.2" ry="3.2" fill="#e8d000"/><path d="M12.5,18.5 L22,22.5" stroke="#3a3a3a" stroke-width="3"/><path d="M12.5,18.5 L21,22" stroke="#e0c800" stroke-width="1.8"/><path d="M2,13 L9,21 M9,13 L2,21" stroke="#d00000" stroke-width="2"/></g><g transform="translate(1143,47)"><path d="M1,21 V1 H21 V21" fill="none" stroke="#5ac830" stroke-width="2" stroke-linejoin="miter"/><polygon points="1,2 12,3.5 12,21 1,17" fill="#dadada" stroke="#4a4a4a" stroke-width="0.9"/><polygon points="1,2 5,0.3 16,1.5 12,3.5" fill="#f0f0f0" stroke="#4a4a4a" stroke-width="0.7"/><polygon points="12,3.5 16,1.5 17,15.5 12,21" fill="#c4c4c4" stroke="#4a4a4a" stroke-width="0.8"/><path d="M2.3,10.5 A4.6,4.8 0 0 1 11.3,10.8 Z" fill="#f2da00"/><path d="M2.3,10.5 A4.6,4.6 0 0 0 11.3,10.8 Z" fill="#5e5e5e"/><ellipse cx="14.5" cy="10.5" rx="1.2" ry="3.2" fill="#e8d000"/><path d="M12.5,18.5 L22,22.5" stroke="#3a3a3a" stroke-width="3"/><path d="M12.5,18.5 L21,22" stroke="#e0c800" stroke-width="1.8"/><path d="M1,10 L10,1 L20,10 L12,20" fill="none" stroke="#d00000" stroke-width="2"/></g><g transform="translate(1176,47)"><polygon points="1,2 12,3.5 12,21 1,17" fill="#dadada" stroke="#4a4a4a" stroke-width="0.9"/><polygon points="1,2 5,0.3 16,1.5 12,3.5" fill="#f0f0f0" stroke="#4a4a4a" stroke-width="0.7"/><polygon points="12,3.5 16,1.5 17,15.5 12,21" fill="#c4c4c4" stroke="#4a4a4a" stroke-width="0.8"/><path d="M2.3,10.5 A4.6,4.8 0 0 1 11.3,10.8 Z" fill="#f2da00"/><path d="M2.3,10.5 A4.6,4.6 0 0 0 11.3,10.8 Z" fill="#5e5e5e"/><ellipse cx="14.5" cy="10.5" rx="1.2" ry="3.2" fill="#e8d000"/><path d="M12.5,18.5 L22,22.5" stroke="#3a3a3a" stroke-width="3"/><path d="M12.5,18.5 L21,22" stroke="#e0c800" stroke-width="1.8"/><path d="M1,10 L10,1 L20,10 L12,20" fill="none" stroke="#d00000" stroke-width="2"/></g><g transform="translate(1209,47)"><path d="M1,21 V1 H21 V21" fill="none" stroke="#5ac830" stroke-width="2"/><polygon points="1,2 12,3.5 12,21 1,17" fill="#dadada" stroke="#4a4a4a" stroke-width="0.9"/><polygon points="1,2 5,0.3 16,1.5 12,3.5" fill="#f0f0f0" stroke="#4a4a4a" stroke-width="0.7"/><polygon points="12,3.5 16,1.5 17,15.5 12,21" fill="#c4c4c4" stroke="#4a4a4a" stroke-width="0.8"/><path d="M2.3,10.5 A4.6,4.8 0 0 1 11.3,10.8 Z" fill="#f2da00"/><path d="M2.3,10.5 A4.6,4.6 0 0 0 11.3,10.8 Z" fill="#5e5e5e"/><ellipse cx="14.5" cy="10.5" rx="1.2" ry="3.2" fill="#e8d000"/><path d="M12.5,18.5 L22,22.5" stroke="#3a3a3a" stroke-width="3"/><path d="M12.5,18.5 L21,22" stroke="#e0c800" stroke-width="1.8"/></g></svg>
<div class="a" style="left:444px;top:7px;width:192px;height:25px;border:1px solid #b4b4b4;border-radius:3px;background:linear-gradient(#fbfbfb,#eeeeee)"></div>
<svg class="a" style="left:0;top:0" width="700" height="40"><polygon points="450,14 458,11 466,13.5 466,23 458,26 450,23.5" fill="#2a5aa0" stroke="#1a3050" stroke-width="0.7"/><polygon points="450,14 458,16.5 466,13.5 458,11" fill="#8ab8ec"/><polygon points="450,14 458,16.5 458,26 450,23.5" fill="#4a88d0"/><polygon points="621,18 629,18 625,22" fill="#505050"/></svg>
<div class="t" style="left:469px;top:11px">Part</div>
<div class="t" style="left:4px;top:79px">Vista combinada</div>
<div class="a" style="left:1px;top:98px;width:77px;height:28px;background:#fafafa;border:1px solid #c2c2c2;border-bottom:none;border-radius:3px 3px 0 0"></div>
<div class="a" style="left:78px;top:100px;width:68px;height:25px;background:linear-gradient(#ececec,#e2e2e2);border:1px solid #c2c2c2;border-bottom:none;border-radius:3px 3px 0 0"></div>
<div class="t" style="left:13px;top:103px">Modelo</div>
<div class="t" style="left:89px;top:104px">Tareas</div>
<div class="a" style="left:0;top:125px;width:373px;height:588px;background:#fafafa;border:1px solid #b8b8b8"></div>
<div class="a" style="left:2px;top:126px;width:369px;height:323px;background:#fff;border:1px solid #b0b0b0"></div>
<div class="a" style="left:3px;top:128px;width:188px;height:20px;background:linear-gradient(#f8f8f8,#ececec);border-bottom:1px solid #b8b8b8"></div>
<div class="a" style="left:191px;top:128px;width:180px;height:20px;background:linear-gradient(#f8f8f8,#ececec)"></div>
<div class="t" style="left:5px;top:129px">Etiquetas &amp; Atributos</div>
<div class="t" style="left:6px;top:148px">Aplicación</div>
<div class="t" style="left:48px;top:166px;font-weight:bold;font-size:14.5px">8_reles_pcb</div>
<div class="t" style="left:68px;top:185px;color:#0c0c0c">relés</div>
<div class="t" style="left:68px;top:204px;color:#0c0c0c">diodos LED</div>
<div class="t" style="left:68px;top:223px;color:#0c0c0c">optoaclopadores</div>
<div class="t" style="left:68px;top:242px;color:#0c0c0c">placa pcb</div>
<div class="t" style="left:68px;top:261px;color:#0c0c0c">tapa inferior</div>
<div class="t" style="left:68px;top:280px;color:#0c0c0c">pines de entradas</div>
<div class="t" style="left:68px;top:299px;color:#0c0c0c">Array012</div>
<div class="t" style="left:68px;top:318px;color:#0c0c0c">jumper</div>
<div class="t" style="left:68px;top:337px;color:#b4b4b4">Cubo021</div>
<div class="t" style="left:68px;top:356px;color:#0c0c0c">salidas de relés</div>
<div class="t" style="left:68px;top:375px;color:#0c0c0c">tapa-superior</div>
<div class="a" style="left:2px;top:453px;width:369px;height:232px;border:1px solid #b8b8b8;background:#fafafa"></div>
<div class="a" style="left:4px;top:455px;width:365px;height:227px;background:#fff;border:1px solid #b0b0b0"></div>
<div class="a" style="left:5px;top:456px;width:363px;height:21px;background:linear-gradient(#f8f8f8,#ececec);border-bottom:1px solid #b8b8b8"></div>
<div class="a" style="left:104px;top:457px;width:1px;height:20px;background:#c8c8c8"></div>
<div class="t" style="left:7px;top:458px">Propiedad</div>
<div class="t" style="left:108px;top:458px">Valor</div>
<div class="a" style="left:2px;top:684px;width:60px;height:25px;background:linear-gradient(#ececec,#e2e2e2);border:1px solid #c2c2c2;border-top:none;border-radius:0 0 3px 3px"></div>
<div class="a" style="left:61px;top:684px;width:64px;height:27px;background:#fafafa;border:1px solid #c2c2c2;border-top:none;border-radius:0 0 3px 3px"></div>
<div class="t" style="left:14px;top:688px">Vista</div>
<div class="t" style="left:73px;top:689px">Datos</div>
<div class="a" style="left:379px;top:78px;width:987px;height:604px;background:linear-gradient(#34346a,#9495a9)"></div>
<svg class="a" style="left:0;top:0" width="1366" height="744" viewBox="0 0 1366 744"><polygon points="600.0,280.0 990.0,502.0 990.0,568.6 600.0,342.6" fill="#858585"/><polygon points="990.0,502.0 1145.0,415.0 1145.0,479.3 990.0,568.6" fill="#868686"/><polygon points="600.0,280.0 990.0,502.0 1145.0,415.0 755.0,191.0" fill="#898989"/><polygon points="600.0,280.0 990.0,502.0 1145.0,415.0 1145.0,421.0 990.0,507.5 600.0,285.5" fill="#b6b6b6"/><rect x="987" y="503" width="6" height="65" fill="#b6b6b6"/><polyline points="600.0,285.5 990.0,507.5 1145.0,421.0" fill="none" stroke="#000" stroke-width="1.5"/><line x1="987.2" y1="504" x2="987.2" y2="568" stroke="#000" stroke-width="1.5" stroke-linejoin="round"/><line x1="992.8" y1="504" x2="992.8" y2="568" stroke="#000" stroke-width="1.5" stroke-linejoin="round"/><polyline points="600.0,310.0 987.0,533.2" fill="none" stroke="#000" stroke-width="1.5" stroke-linejoin="round"/><polyline points="993.0,533.2 1145.0,444.8" fill="none" stroke="#000" stroke-width="1.5" stroke-linejoin="round"/><line x1="987" y1="534.7" x2="993" y2="534.7" stroke="#000" stroke-width="1.5" stroke-linejoin="round"/><polygon points="600.0,280.0 755.0,191.0 1145.0,415.0 1145.0,479.3 990.0,568.6 600.0,342.6" fill="none" stroke="#000" stroke-width="1.5" stroke-linejoin="round"/><polyline points="600.0,280.0 990.0,502.0 1145.0,415.0" fill="none" stroke="#000" stroke-width="1.5" stroke-linejoin="round"/><polygon points="674.0,249.5 751.0,204.6 1117.5,417.5 1040.5,461.5" fill="#8c8c8c" stroke="#000" stroke-width="1.5" stroke-linejoin="round"/><polyline points="679.0,250.0 751.0,208.5 1111.0,416.5" fill="none" stroke="#111" stroke-width="1.2"/><line x1="755" y1="210.6" x2="755" y2="231.6" stroke="#111" stroke-width="1.6"/><polyline points="730.5,220.2 1092.5,429.8" fill="none" stroke="#111" stroke-width="1.3"/><polyline points="746.6,227.2 1092.5,427.2" fill="none" stroke="#111" stroke-width="1.2"/><polygon points="678.5,250.8 730.5,220.2 775.8,246.4 723.8,277.0" fill="#515151" stroke="#111" stroke-width="1.3"/><polygon points="723.8,277.0 775.8,246.4 821.0,272.6 769.0,303.2" fill="#515151" stroke="#111" stroke-width="1.3"/><line x1="726.2" y1="278.5" x2="778.2" y2="247.9" stroke="#111" stroke-width="1.2"/><line x1="725.0" y1="277.7" x2="777.0" y2="247.1" stroke="#9a9a9a" stroke-width="0.9"/><polygon points="769.0,303.2 821.0,272.6 866.2,298.8 814.2,329.4" fill="#515151" stroke="#111" stroke-width="1.3"/><line x1="771.5" y1="304.7" x2="823.5" y2="274.1" stroke="#111" stroke-width="1.2"/><line x1="770.2" y1="303.9" x2="822.2" y2="273.3" stroke="#9a9a9a" stroke-width="0.9"/><polygon points="814.2,329.4 866.2,298.8 911.5,325.0 859.5,355.6" fill="#515151" stroke="#111" stroke-width="1.3"/><line x1="816.8" y1="330.9" x2="868.8" y2="300.3" stroke="#111" stroke-width="1.2"/><line x1="815.5" y1="330.1" x2="867.5" y2="299.5" stroke="#9a9a9a" stroke-width="0.9"/><polygon points="859.5,355.6 911.5,325.0 956.8,351.2 904.8,381.8" fill="#515151" stroke="#111" stroke-width="1.3"/><line x1="862.0" y1="357.1" x2="914.0" y2="326.5" stroke="#111" stroke-width="1.2"/><line x1="860.7" y1="356.3" x2="912.7" y2="325.7" stroke="#9a9a9a" stroke-width="0.9"/><polygon points="904.8,381.8 956.8,351.2 1002.0,377.4 950.0,408.0" fill="#515151" stroke="#111" stroke-width="1.3"/><line x1="907.2" y1="383.3" x2="959.2" y2="352.7" stroke="#111" stroke-width="1.2"/><line x1="906.0" y1="382.5" x2="958.0" y2="351.9" stroke="#9a9a9a" stroke-width="0.9"/><polygon points="950.0,408.0 1002.0,377.4 1047.2,403.6 995.2,434.2" fill="#515151" stroke="#111" stroke-width="1.3"/><line x1="952.5" y1="409.5" x2="1004.5" y2="378.9" stroke="#111" stroke-width="1.2"/><line x1="951.2" y1="408.7" x2="1003.2" y2="378.1" stroke="#9a9a9a" stroke-width="0.9"/><polygon points="995.2,434.2 1047.2,403.6 1092.5,429.8 1040.5,460.4" fill="#515151" stroke="#111" stroke-width="1.3"/><line x1="997.8" y1="435.7" x2="1049.8" y2="405.1" stroke="#111" stroke-width="1.2"/><line x1="996.5" y1="434.9" x2="1048.5" y2="404.3" stroke="#9a9a9a" stroke-width="0.9"/><polyline points="674.0,249.5 1040.5,461.5 1117.5,417.5" fill="none" stroke="#000" stroke-width="1.5" stroke-linejoin="round"/><polygon points="635.2,271.8 641.8,268.3 678.8,289.8 672.2,293.3" fill="#5c5c5c" stroke="#000" stroke-width="1.7" stroke-linejoin="round"/><line x1="638.7" y1="271.5" x2="671.7" y2="291.5" stroke="#a4a4a4" stroke-width="1"/><polygon points="680.3,297.7 686.9,294.2 723.9,315.7 717.3,319.2" fill="#5c5c5c" stroke="#000" stroke-width="1.7" stroke-linejoin="round"/><line x1="683.8" y1="297.4" x2="716.8" y2="317.4" stroke="#a4a4a4" stroke-width="1"/><polygon points="725.4,323.6 732.0,320.1 769.0,341.6 762.4,345.1" fill="#5c5c5c" stroke="#000" stroke-width="1.7" stroke-linejoin="round"/><line x1="728.9" y1="323.3" x2="761.9" y2="343.3" stroke="#a4a4a4" stroke-width="1"/><polygon points="770.5,349.5 777.1,346.0 814.1,367.5 807.5,371.0" fill="#5c5c5c" stroke="#000" stroke-width="1.7" stroke-linejoin="round"/><line x1="774.0" y1="349.2" x2="807.0" y2="369.2" stroke="#a4a4a4" stroke-width="1"/><polygon points="815.6,375.4 822.2,371.9 859.2,393.4 852.6,396.9" fill="#5c5c5c" stroke="#000" stroke-width="1.7" stroke-linejoin="round"/><line x1="819.1" y1="375.1" x2="852.1" y2="395.1" stroke="#a4a4a4" stroke-width="1"/><polygon points="860.7,401.3 867.3,397.8 904.3,419.3 897.7,422.8" fill="#5c5c5c" stroke="#000" stroke-width="1.7" stroke-linejoin="round"/><line x1="864.2" y1="401.0" x2="897.2" y2="421.0" stroke="#a4a4a4" stroke-width="1"/><polygon points="905.8,427.2 912.4,423.7 949.4,445.2 942.8,448.7" fill="#5c5c5c" stroke="#000" stroke-width="1.7" stroke-linejoin="round"/><line x1="909.3" y1="426.9" x2="942.3" y2="446.9" stroke="#a4a4a4" stroke-width="1"/><polygon points="950.9,453.1 957.5,449.6 994.5,471.1 987.9,474.6" fill="#5c5c5c" stroke="#000" stroke-width="1.7" stroke-linejoin="round"/><line x1="954.4" y1="452.8" x2="987.4" y2="472.8" stroke="#a4a4a4" stroke-width="1"/><polygon points="758.6,365.3 773.7,356.7 856.5,404.0 841.4,412.0" fill="#8a8a8a" stroke="#000" stroke-width="1.6" stroke-linejoin="round"/><line x1="762" y1="366" x2="775" y2="359" stroke="#000" stroke-width="1.4"/><line x1="775" y1="360" x2="852" y2="404" stroke="#000" stroke-width="1.4"/><line x1="775.3" y1="371.7" x2="785.5" y2="366.9" stroke="#000" stroke-width="1.4"/><line x1="785.5" y1="377.6" x2="795" y2="373.9" stroke="#000" stroke-width="1.4"/><line x1="798.9" y1="374.4" x2="798.9" y2="385.2" stroke="#000" stroke-width="1.4"/><line x1="785.5" y1="366.9" x2="829.6" y2="393.2" stroke="#000" stroke-width="1.4"/><line x1="819.9" y1="398.6" x2="829.6" y2="393.2" stroke="#000" stroke-width="1.4"/><line x1="831.7" y1="404.5" x2="841.4" y2="400.2" stroke="#000" stroke-width="1.4"/><line x1="844.6" y1="400.2" x2="844.6" y2="408.8" stroke="#000" stroke-width="1.4"/><line x1="795" y1="373.9" x2="841.4" y2="400.2" stroke="#000" stroke-width="1.4"/><polygon points="935.6,466.0 948.7,459.0 977.0,475.0 963.8,483.0" fill="#8a8a8a" stroke="#000" stroke-width="1.6" stroke-linejoin="round"/><line x1="939" y1="466.5" x2="949" y2="461.5" stroke="#000" stroke-width="1.4"/><line x1="949" y1="462" x2="973" y2="476" stroke="#000" stroke-width="1.4"/><line x1="952" y1="476" x2="961" y2="471" stroke="#000" stroke-width="1.4"/><line x1="961" y1="471" x2="975" y2="479" stroke="#000" stroke-width="1.4"/><line x1="963" y1="481" x2="972" y2="476" stroke="#000" stroke-width="1.4"/></svg>
<svg class="a" style="left:0;top:0" width="1366" height="744" viewBox="0 0 1366 744"><polygon points="1274.7,95.3 1292.1,95.3 1283.4,86" fill="#dfe3ea"/><polygon points="1274.8,227 1292.2,227 1283.5,236" fill="#dfe3ea"/><polygon points="1217,152.7 1217,169.2 1208.5,161" fill="#dfe3ea"/><polygon points="1349.4,152.7 1349.4,169.2 1358.3,161" fill="#dfe3ea"/><path d="M1261.5,94.5 Q1244,100 1234,110" stroke="#dfe3ea" stroke-width="5" fill="none" stroke-linecap="butt"/><polygon points="1229,106 1229.5,118 1241,116" fill="#dfe3ea"/><path d="M1305,94.5 Q1322.5,100 1332.5,110" stroke="#dfe3ea" stroke-width="5" fill="none"/><polygon points="1337.5,106 1337,118 1325.5,116" fill="#dfe3ea"/><path d="M1283,119 Q1287,119 1292,121.5 L1319,136 Q1327,140.5 1326.5,149 L1323.5,175 Q1322.5,182 1316,186 L1291,203 Q1283,207.5 1275,203 L1250,186 Q1243.5,182 1243,175 L1240,149 Q1239.5,140.5 1247,136 L1274,121.5 Q1279,119 1283,119 Z" fill="#f4f5f8"/><path d="M1246,140 L1283,158 L1320,140" stroke="#e1e4eb" stroke-width="8" fill="none"/><path d="M1283,160 L1283,204" stroke="#e1e4eb" stroke-width="8" fill="none"/><path d="M1244,150 L1246,182 M1322,150 L1320,182" stroke="#eceef2" stroke-width="5" fill="none"/><circle cx="1283" cy="162" r="9.5" fill="#f0f2f5"/><line x1="1283" y1="128" x2="1283" y2="153" stroke="#c9ccd4" stroke-width="1.6"/><line x1="1290" y1="166" x2="1312" y2="179" stroke="#c9ccd4" stroke-width="1.3"/><line x1="1277" y1="166" x2="1254" y2="179" stroke="#b8e0a8" stroke-width="1"/><text x="0" y="0" transform="translate(1272,128) rotate(25) scale(-1,1) translate(-20,0) scale(1,-1) translate(0,-7)" font-family="Liberation Sans" font-size="10" fill="#111">qoT</text><text x="0" y="0" transform="translate(1248,173) rotate(30) skewX(-8)" font-family="Liberation Sans" font-size="11" fill="#111">Front</text><text x="0" y="0" transform="translate(1296,190) rotate(-30) skewX(-20)" font-family="Liberation Sans" font-size="11" fill="#111">Right</text><line x1="1245" y1="181.5" x2="1235" y2="133" stroke="#1010ff" stroke-width="1.4"/><line x1="1245" y1="181.5" x2="1282" y2="215" stroke="#e01010" stroke-width="1.4"/><text x="1230" y="132" font-family="Liberation Sans" font-size="9" fill="#1010ff">Z</text><text x="1285" y="224" font-family="Liberation Sans" font-size="9" fill="#e01010">X</text><polygon points="1309.5,213 1320,208 1331,212 1331,226 1320,230 1309.5,225" fill="#cfcfcf"/><polygon points="1309.5,213 1320,208 1331,212 1320,216.5" fill="#ececec"/><polygon points="1320,216.5 1331,212 1331,226 1320,230" fill="#dcdcdc"/><polygon points="1336,215.5 1345,215.5 1340.5,221.5" fill="#333"/></svg>
<div class="a" style="left:379px;top:682px;width:987px;height:1px;background:#f8f8f8"></div>
<div class="a" style="left:379px;top:683px;width:987px;height:1px;background:#acacac"></div>
<div class="a" style="left:379px;top:683px;width:175px;height:28px;background:linear-gradient(#e0e0e0,#dadada);border:1px solid #b0b0b0;border-radius:0 0 3px 3px"></div>
<div class="a" style="left:553px;top:682px;width:176px;height:31px;background:linear-gradient(#f4f4f4,#f0f0f0);border:1px solid #b0b0b0;border-top:none;border-radius:0 0 3px 3px"></div>
<div class="t" style="left:411px;top:689px">Página de inicio</div>
<div class="t" style="left:585px;top:690px">8_reles_pcb : 1*</div>
<div class="t" style="left:1147px;top:721px">CAD</div>
<div class="t" style="left:1200px;top:721px">245,25 mm x 150,08 mm</div>
<svg class="a" style="left:0;top:0" width="380" height="400"><polygon points="9,172 17,172 13,176.5" fill="#585858"/><rect x="27.5" y="166.5" width="13" height="15" rx="1" fill="#f4f4f4" stroke="#a8a8a8"/><polygon points="30,173 34,171 38,172.5 38,178 34,180 30,178.5" fill="#2a5aa0"/><polygon points="30,173 34,174.5 38,172.5 34,171" fill="#8ab8ec"/><polygon points="30,173 34,174.5 34,180 30,178.5" fill="#4a88d0"/><circle cx="36.5" cy="170.5" r="3" fill="#e01818"/><polygon points="31,190.0 35.5,194.0 31,198.0" fill="#585858"/><rect x="47" y="185.5" width="4.2" height="6.8" fill="#3a6cb0"/><rect x="47.8" y="186.3" width="2.2" height="5" fill="#5a90d0"/><rect x="47" y="193.0" width="4.2" height="6.8" fill="#3a6cb0"/><rect x="47.8" y="193.8" width="2.2" height="5" fill="#5a90d0"/><rect x="52" y="185.5" width="4.2" height="6.8" fill="#3a6cb0"/><rect x="52.8" y="186.3" width="2.2" height="5" fill="#5a90d0"/><rect x="52" y="193.0" width="4.2" height="6.8" fill="#3a6cb0"/><rect x="52.8" y="193.8" width="2.2" height="5" fill="#5a90d0"/><rect x="57" y="185.5" width="4.2" height="6.8" fill="#3a6cb0"/><rect x="57.8" y="186.3" width="2.2" height="5" fill="#5a90d0"/><rect x="57" y="193.0" width="4.2" height="6.8" fill="#3a6cb0"/><rect x="57.8" y="193.8" width="2.2" height="5" fill="#5a90d0"/><polygon points="31,209.0 35.5,213.0 31,217.0" fill="#585858"/><rect x="47" y="204.5" width="4.2" height="6.8" fill="#3a6cb0"/><rect x="47.8" y="205.3" width="2.2" height="5" fill="#5a90d0"/><rect x="47" y="212.0" width="4.2" height="6.8" fill="#3a6cb0"/><rect x="47.8" y="212.8" width="2.2" height="5" fill="#5a90d0"/><rect x="52" y="204.5" width="4.2" height="6.8" fill="#3a6cb0"/><rect x="52.8" y="205.3" width="2.2" height="5" fill="#5a90d0"/><rect x="52" y="212.0" width="4.2" height="6.8" fill="#3a6cb0"/><rect x="52.8" y="212.8" width="2.2" height="5" fill="#5a90d0"/><rect x="57" y="204.5" width="4.2" height="6.8" fill="#3a6cb0"/><rect x="57.8" y="205.3" width="2.2" height="5" fill="#5a90d0"/><rect x="57" y="212.0" width="4.2" height="6.8" fill="#3a6cb0"/><rect x="57.8" y="212.8" width="2.2" height="5" fill="#5a90d0"/><polygon points="31,228.0 35.5,232.0 31,236.0" fill="#585858"/><rect x="47" y="223.5" width="4.2" height="6.8" fill="#3a6cb0"/><rect x="47.8" y="224.3" width="2.2" height="5" fill="#5a90d0"/><rect x="47" y="231.0" width="4.2" height="6.8" fill="#3a6cb0"/><rect x="47.8" y="231.8" width="2.2" height="5" fill="#5a90d0"/><rect x="52" y="223.5" width="4.2" height="6.8" fill="#3a6cb0"/><rect x="52.8" y="224.3" width="2.2" height="5" fill="#5a90d0"/><rect x="52" y="231.0" width="4.2" height="6.8" fill="#3a6cb0"/><rect x="52.8" y="231.8" width="2.2" height="5" fill="#5a90d0"/><rect x="57" y="223.5" width="4.2" height="6.8" fill="#3a6cb0"/><rect x="57.8" y="224.3" width="2.2" height="5" fill="#5a90d0"/><rect x="57" y="231.0" width="4.2" height="6.8" fill="#3a6cb0"/><rect x="57.8" y="231.8" width="2.2" height="5" fill="#5a90d0"/><polygon points="31,247.0 35.5,251.0 31,255.0" fill="#585858"/><circle cx="51.5" cy="252.0" r="5.2" fill="#3a70b8"/><circle cx="51" cy="251.5" r="3.5" fill="#5a90d0"/><circle cx="56" cy="247.5" r="4.8" fill="#f0f0ee" stroke="#8a8a8a" stroke-width="0.8"/><polygon points="31,266.0 35.5,270.0 31,274.0" fill="#585858"/><circle cx="51.5" cy="271.0" r="5.2" fill="#3a70b8"/><circle cx="51" cy="270.5" r="3.5" fill="#5a90d0"/><circle cx="56" cy="266.5" r="4.8" fill="#f0f0ee" stroke="#8a8a8a" stroke-width="0.8"/><polygon points="31,285.0 35.5,289.0 31,293.0" fill="#585858"/><rect x="47" y="280.5" width="4.2" height="6.8" fill="#3a6cb0"/><rect x="47.8" y="281.3" width="2.2" height="5" fill="#5a90d0"/><rect x="47" y="288.0" width="4.2" height="6.8" fill="#3a6cb0"/><rect x="47.8" y="288.8" width="2.2" height="5" fill="#5a90d0"/><rect x="52" y="280.5" width="4.2" height="6.8" fill="#3a6cb0"/><rect x="52.8" y="281.3" width="2.2" height="5" fill="#5a90d0"/><rect x="52" y="288.0" width="4.2" height="6.8" fill="#3a6cb0"/><rect x="52.8" y="288.8" width="2.2" height="5" fill="#5a90d0"/><rect x="57" y="280.5" width="4.2" height="6.8" fill="#3a6cb0"/><rect x="57.8" y="281.3" width="2.2" height="5" fill="#5a90d0"/><rect x="57" y="288.0" width="4.2" height="6.8" fill="#3a6cb0"/><rect x="57.8" y="288.8" width="2.2" height="5" fill="#5a90d0"/><polygon points="31,304.0 35.5,308.0 31,312.0" fill="#585858"/><rect x="47" y="299.5" width="4.2" height="6.8" fill="#3a6cb0"/><rect x="47.8" y="300.3" width="2.2" height="5" fill="#5a90d0"/><rect x="47" y="307.0" width="4.2" height="6.8" fill="#3a6cb0"/><rect x="47.8" y="307.8" width="2.2" height="5" fill="#5a90d0"/><rect x="52" y="299.5" width="4.2" height="6.8" fill="#3a6cb0"/><rect x="52.8" y="300.3" width="2.2" height="5" fill="#5a90d0"/><rect x="52" y="307.0" width="4.2" height="6.8" fill="#3a6cb0"/><rect x="52.8" y="307.8" width="2.2" height="5" fill="#5a90d0"/><rect x="57" y="299.5" width="4.2" height="6.8" fill="#3a6cb0"/><rect x="57.8" y="300.3" width="2.2" height="5" fill="#5a90d0"/><rect x="57" y="307.0" width="4.2" height="6.8" fill="#3a6cb0"/><rect x="57.8" y="307.8" width="2.2" height="5" fill="#5a90d0"/><polygon points="31,323.0 35.5,327.0 31,331.0" fill="#585858"/><circle cx="51.5" cy="328.0" r="5.2" fill="#3a70b8"/><circle cx="51" cy="327.5" r="3.5" fill="#5a90d0"/><circle cx="56" cy="323.5" r="4.8" fill="#f0f0ee" stroke="#8a8a8a" stroke-width="0.8"/><polygon points="47,341.5 52,338.5 60.5,340.0 60.5,349.0 56,352.0 47,350.5" fill="#9a9a9a" stroke="#7a7a7a" stroke-width="0.8"/><polygon points="47,341.5 56,343.0 60.5,340.0 52,338.5" fill="#c0c0c0"/><polygon points="56,343.0 60.5,340.0 60.5,349.0 56,352.0" fill="#8a8a8a"/><polygon points="31,361.0 35.5,365.0 31,369.0" fill="#585858"/><rect x="47" y="356.5" width="4.2" height="6.8" fill="#3a6cb0"/><rect x="47.8" y="357.3" width="2.2" height="5" fill="#5a90d0"/><rect x="47" y="364.0" width="4.2" height="6.8" fill="#3a6cb0"/><rect x="47.8" y="364.8" width="2.2" height="5" fill="#5a90d0"/><rect x="52" y="356.5" width="4.2" height="6.8" fill="#3a6cb0"/><rect x="52.8" y="357.3" width="2.2" height="5" fill="#5a90d0"/><rect x="52" y="364.0" width="4.2" height="6.8" fill="#3a6cb0"/><rect x="52.8" y="364.8" width="2.2" height="5" fill="#5a90d0"/><rect x="57" y="356.5" width="4.2" height="6.8" fill="#3a6cb0"/><rect x="57.8" y="357.3" width="2.2" height="5" fill="#5a90d0"/><rect x="57" y="364.0" width="4.2" height="6.8" fill="#3a6cb0"/><rect x="57.8" y="364.8" width="2.2" height="5" fill="#5a90d0"/><polygon points="31,380.0 35.5,384.0 31,388.0" fill="#585858"/><circle cx="51.5" cy="385.0" r="5.2" fill="#3a70b8"/><circle cx="51" cy="384.5" r="3.5" fill="#5a90d0"/><circle cx="56" cy="380.5" r="4.8" fill="#f0f0ee" stroke="#8a8a8a" stroke-width="0.8"/></svg>
<svg class="a" style="left:0;top:0" width="1366" height="744"><g transform="translate(391,688)"><path d="M0.5,0.5 H9 V3.5 H4 V6 H7.5 V9 H4 V15 H0.5 Z" fill="#d81818" stroke="#901010" stroke-width="0.6"/><circle cx="9.5" cy="10" r="4.2" fill="#4a78c0"/><circle cx="14.50" cy="10.00" r="1.3" fill="#4a78c0"/><circle cx="13.04" cy="13.54" r="1.3" fill="#4a78c0"/><circle cx="9.50" cy="15.00" r="1.3" fill="#4a78c0"/><circle cx="5.96" cy="13.54" r="1.3" fill="#4a78c0"/><circle cx="4.50" cy="10.00" r="1.3" fill="#4a78c0"/><circle cx="5.96" cy="6.46" r="1.3" fill="#4a78c0"/><circle cx="9.50" cy="5.00" r="1.3" fill="#4a78c0"/><circle cx="13.04" cy="6.46" r="1.3" fill="#4a78c0"/><circle cx="9.5" cy="10" r="1.6" fill="#e8e8e8"/></g><path d="M525.5,692.5 L534.5,701.5 M534.5,692.5 L525.5,701.5" stroke="#606060" stroke-width="3" stroke-linecap="round"/><g transform="translate(565,689.5)"><path d="M0.5,0.5 H9 V3.5 H4 V6 H7.5 V9 H4 V15 H0.5 Z" fill="#d81818" stroke="#901010" stroke-width="0.6"/><circle cx="9.5" cy="10" r="4.2" fill="#4a78c0"/><circle cx="14.50" cy="10.00" r="1.3" fill="#4a78c0"/><circle cx="13.04" cy="13.54" r="1.3" fill="#4a78c0"/><circle cx="9.50" cy="15.00" r="1.3" fill="#4a78c0"/><circle cx="5.96" cy="13.54" r="1.3" fill="#4a78c0"/><circle cx="4.50" cy="10.00" r="1.3" fill="#4a78c0"/><circle cx="5.96" cy="6.46" r="1.3" fill="#4a78c0"/><circle cx="9.50" cy="5.00" r="1.3" fill="#4a78c0"/><circle cx="13.04" cy="6.46" r="1.3" fill="#4a78c0"/><circle cx="9.5" cy="10" r="1.6" fill="#e8e8e8"/></g><path d="M701.5,693.5 L710.5,702.5 M710.5,693.5 L701.5,702.5" stroke="#606060" stroke-width="3" stroke-linecap="round"/><rect x="1133.5" y="723.5" width="9" height="12" rx="4" fill="none" stroke="#404040" stroke-width="1.4"/><line x1="1138" y1="725.5" x2="1138" y2="728" stroke="#404040" stroke-width="1.2"/><polygon points="1183,729 1189,729 1186,732" fill="#707070"/><rect x="346.5" y="81.5" width="11" height="11" rx="2" fill="#f2f2f2" stroke="#8a8a8a" stroke-width="1"/><rect x="360.5" y="81.5" width="11" height="11" rx="2" fill="#f2f2f2" stroke="#8a8a8a" stroke-width="1"/><rect x="350.5" y="84.5" width="4" height="4" fill="none" stroke="#707070" stroke-width="1"/><rect x="348.5" y="86.5" width="4" height="4" fill="#f2f2f2" stroke="#707070" stroke-width="1"/><path d="M363.5,84.5 L368.5,89.5 M368.5,84.5 L363.5,89.5" stroke="#606060" stroke-width="2"/><rect x="181" y="450" width="1" height="1" fill="#b0b0b0"/><rect x="184" y="450" width="1" height="1" fill="#b0b0b0"/><rect x="187" y="450" width="1" height="1" fill="#b0b0b0"/><rect x="190" y="450" width="1" height="1" fill="#b0b0b0"/><rect x="193" y="450" width="1" height="1" fill="#b0b0b0"/><rect x="196" y="450" width="1" height="1" fill="#b0b0b0"/><rect x="376" y="389" width="1" height="1" fill="#c0c0c0"/><rect x="376" y="392" width="1" height="1" fill="#c0c0c0"/><rect x="376" y="395" width="1" height="1" fill="#c0c0c0"/><rect x="376" y="398" width="1" height="1" fill="#c0c0c0"/><rect x="376" y="401" width="1" height="1" fill="#c0c0c0"/><rect x="376" y="404" width="1" height="1" fill="#c0c0c0"/><line x1="1336" y1="651" x2="1336" y2="632" stroke="#202090" stroke-width="2"/><rect x="1334" y="637" width="4" height="2.5" fill="#202090"/><line x1="1336" y1="651" x2="1348" y2="644.5" stroke="#108010" stroke-width="1.8"/><line x1="1336" y1="651" x2="1353" y2="662" stroke="#802020" stroke-width="1.8"/><text x="1338.5" y="632.5" font-family="Liberation Sans" font-size="10" fill="#000">Z</text><text x="1350.5" y="645.5" font-family="Liberation Sans" font-size="10" fill="#000">Y</text><text x="1355.5" y="663.5" font-family="Liberation Sans" font-size="10" fill="#000">X</text></svg>
</body></html>
